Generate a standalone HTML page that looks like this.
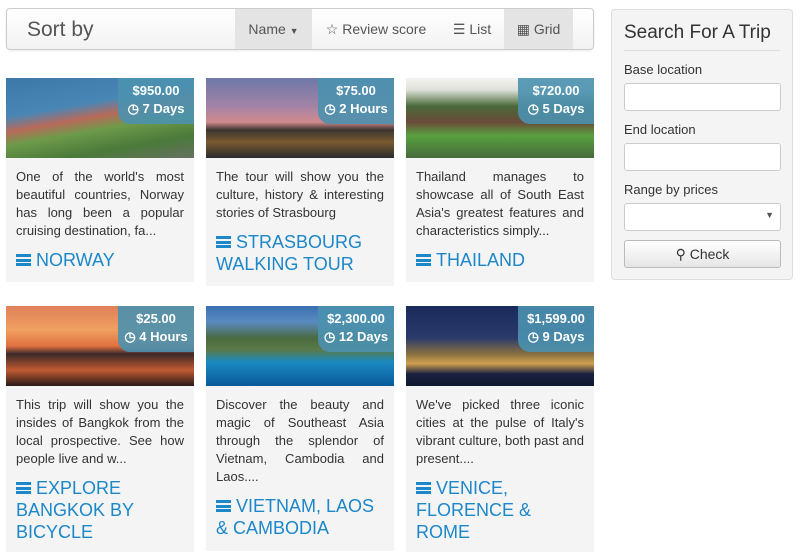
<!DOCTYPE html>
<html><head><style>
*{box-sizing:border-box;margin:0;padding:0}
body{width:800px;height:560px;background:#fff;font-family:"Liberation Sans",Arial,Helvetica,sans-serif;position:relative;overflow:hidden;color:#333}
.bar{position:absolute;left:6px;top:8px;width:588px;height:42px;border:1px solid #ccc;border-radius:4px;background:linear-gradient(#fff,#f2f2f2);box-shadow:0 1px 2px rgba(0,0,0,.08)}
.bar .t{position:absolute;left:20px;top:9px;font-size:21px;color:#555}
.bar .b{position:absolute;top:0;height:40px;line-height:40px;font-size:14px;color:#555;text-align:center}
.card{position:absolute;width:188px;background:#f4f4f4}
.img{height:80px;position:relative;overflow:hidden}
.badge{position:absolute;right:0;top:0;width:76px;height:46px;background:rgba(75,145,175,.9);border-bottom-left-radius:12px;color:#fff;font-weight:bold;font-size:13px;text-align:center;line-height:18px;padding-top:4px}
.txt{padding:10px 10px 0;font-size:13px;line-height:18px;text-align:justify;color:#333}
.ttl{padding:9px 10px 10px;font-size:18px;line-height:22px;color:#1c87c9;text-transform:uppercase}
.ham{display:inline-block;width:15px;height:12px;border-top:3px solid #1c87c9;border-bottom:3px solid #1c87c9;position:relative;margin-right:5px;vertical-align:0}
.ham:after{content:"";position:absolute;left:0;right:0;top:1.5px;height:3px;background:#1c87c9}
.side{position:absolute;left:611px;top:9px;width:182px;height:271px;background:#f4f4f4;border:1px solid #ddd;border-radius:4px}
.side h3{position:absolute;left:12px;top:12px;font-weight:normal;font-size:19px;color:#333}
.side .hr{position:absolute;left:12px;right:12px;top:40px;border-top:1px solid #ddd}
.lab{position:absolute;left:12px;font-size:13px;color:#333}
.in{position:absolute;left:12px;width:157px;height:28px;background:#fff;border:1px solid #ccc;border-radius:3px}
.btn{position:absolute;left:12px;top:230px;width:157px;height:28px;border:1px solid #bbb;border-radius:3px;background:linear-gradient(#fff,#e6e6e6);text-align:center;line-height:26px;font-size:14px;color:#333}
</style></head><body>
<div class="bar"><div class="t">Sort by</div>
<div class="b" style="left:228px;width:77px;background:#e4e4e4">Name <span style="font-size:9px">▼</span></div>
<div class="b" style="left:305px;width:128px">☆ Review score</div>
<div class="b" style="left:433px;width:64px">☰ List</div>
<div class="b" style="left:497px;width:69px;background:#e4e4e4">▦ Grid</div></div>

<div class="card" style="left:6px;top:78px;height:204px"><div class="img" style="background:linear-gradient(170deg,#3b78a8 0%,#4a86b5 35%,#b86a5a 48%,#6e9a4a 60%,#4a7a3a 80%,#677060 100%)"><div class="badge">$950.00<br>◷ 7 Days</div></div>
<div class="txt">One of the world's most beautiful countries, Norway has long been a popular cruising destination, fa...</div><div class="ttl"><span class="ham"></span>Norway</div></div>

<div class="card" style="left:206px;top:78px;height:208px"><div class="img" style="background:linear-gradient(#6e78a8 0%,#a283a6 35%,#d28a8e 55%,#3a3530 65%,#7a5a30 80%,#2a2a30 100%)"><div class="badge">$75.00<br>◷ 2 Hours</div></div>
<div class="txt">The tour will show you the culture, history &amp; interesting stories of Strasbourg</div><div class="ttl"><span class="ham"></span>Strasbourg walking tour</div></div>

<div class="card" style="left:406px;top:78px;height:204px"><div class="img" style="background:linear-gradient(#f4f4f2 0%,#dde0d8 15%,#4a6a3a 35%,#6a4a3a 55%,#5aa040 72%,#456a3a 100%)"><div class="badge">$720.00<br>◷ 5 Days</div></div>
<div class="txt">Thailand manages to showcase all of South East Asia's greatest features and characteristics simply...</div><div class="ttl"><span class="ham"></span>Thailand</div></div>

<div class="card" style="left:6px;top:306px;height:246px"><div class="img" style="background:linear-gradient(#e0805a 0%,#f0a060 30%,#e07040 50%,#3a2a2a 60%,#c05a30 80%,#2a1a1a 100%)"><div class="badge">$25.00<br>◷ 4 Hours</div></div>
<div class="txt">This trip will show you the insides of Bangkok from the local prospective. See how people live and w...</div><div class="ttl"><span class="ham"></span>Explore Bangkok by bicycle</div></div>

<div class="card" style="left:206px;top:306px;height:245px"><div class="img" style="background:linear-gradient(#3a70b0 0%,#5a8ac0 20%,#4a6a40 40%,#5a7a4a 55%,#1a8ac0 70%,#0a5a9a 100%)"><div class="badge">$2,300.00<br>◷ 12 Days</div></div>
<div class="txt">Discover the beauty and magic of Southeast Asia through the splendor of Vietnam, Cambodia and Laos....</div><div class="ttl"><span class="ham"></span>Vietnam, Laos &amp; Cambodia</div></div>

<div class="card" style="left:406px;top:306px;height:246px"><div class="img" style="background:linear-gradient(#1a2a5a 0%,#2a3a6a 40%,#8a7040 60%,#d0a050 72%,#1a2040 85%,#101830 100%)"><div class="badge">$1,599.00<br>◷ 9 Days</div></div>
<div class="txt">We've picked three iconic cities at the pulse of Italy's vibrant culture, both past and present....</div><div class="ttl"><span class="ham"></span>Venice, Florence &amp; Rome</div></div>

<div class="side"><h3>Search For A Trip</h3><div class="hr"></div>
<div class="lab" style="top:52px">Base location</div><div class="in" style="top:73px"></div>
<div class="lab" style="top:112px">End location</div><div class="in" style="top:133px"></div>
<div class="lab" style="top:172px">Range by prices</div><div class="in" style="top:193px"><span style="position:absolute;right:6px;top:6px;font-size:9px;color:#555">▼</span></div>
<div class="btn">&#9906; Check</div></div>
</body></html>
